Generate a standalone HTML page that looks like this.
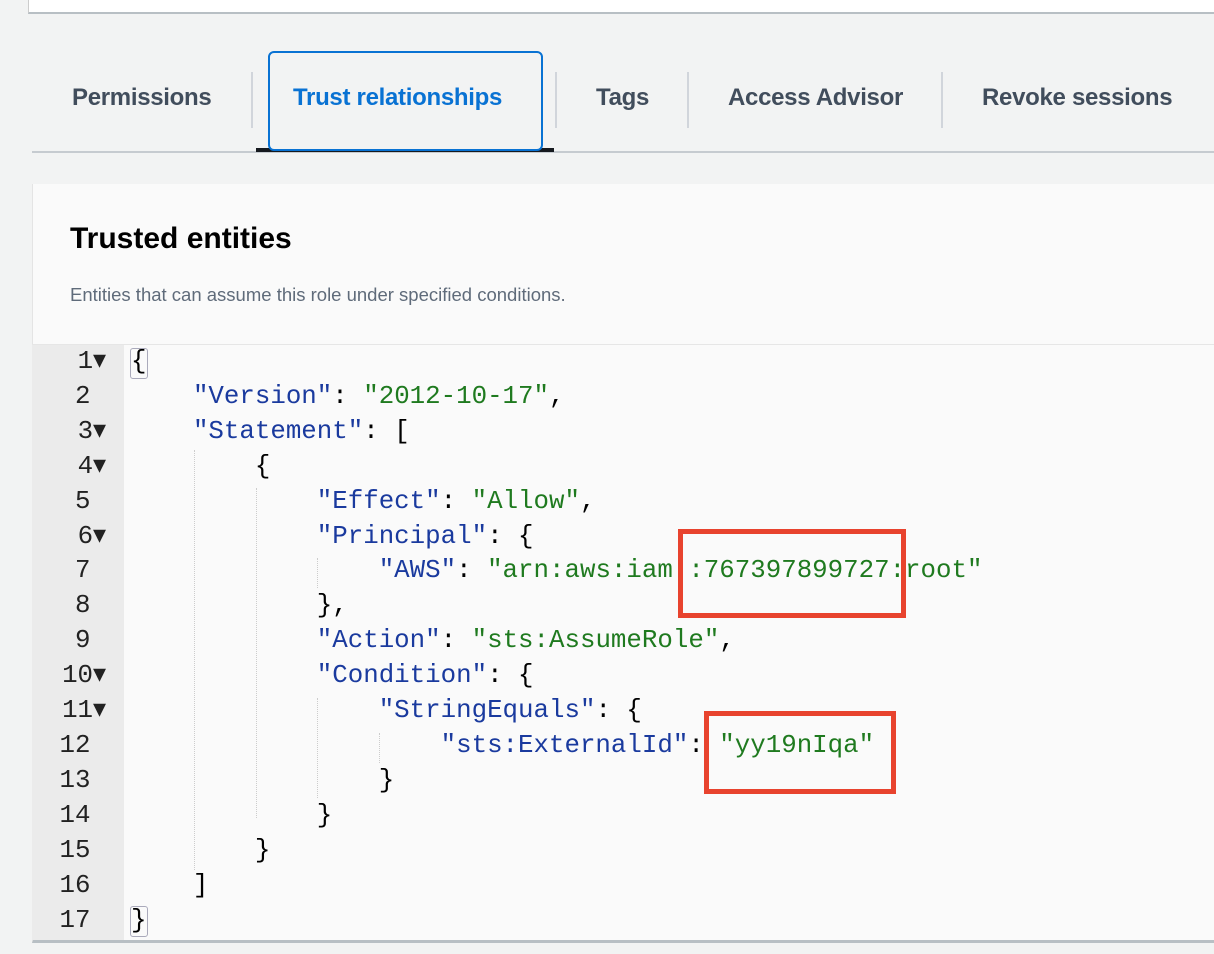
<!DOCTYPE html>
<html><head><style>
body{margin:0;width:1214px;height:954px;background:#f2f3f3;position:relative;overflow:hidden;font-family:"Liberation Sans",sans-serif}
.a{position:absolute}
.tab{position:absolute;top:84px;font-size:24px;font-weight:bold;color:#414d5c;letter-spacing:-0.3px}
.sep{position:absolute;top:72px;width:2px;height:56px;background:#d1d5db}
.code{position:absolute;left:0;top:345px;font-family:"Liberation Mono",monospace;font-size:25.8px;line-height:34.9px;white-space:pre;color:#000}
.ln{position:absolute;left:32px;width:92px;top:345px;height:595px;background:#ebebeb}
.num{position:absolute;right:0;width:90px;text-align:right;padding-right:18px;box-sizing:border-box;font-family:"Liberation Mono",monospace;font-size:25.8px;color:#333}
.k{color:#1a3a9e}.s{color:#1f7a1f}
.guide{position:absolute;border-left:1px dotted #ccc}
.red{position:absolute;border:5px solid #e8432e}
</style></head><body>
<div class="a" style="left:28px;top:-10px;width:1200px;height:22px;background:#fff;border-bottom:2px solid #b8bfc4;border-left:1px solid #ccc"></div>
<div class="a" style="left:32px;top:151px;width:1190px;height:2px;background:#c6cbd0"></div>
<div class="tab" style="left:72px">Permissions</div>
<div class="sep" style="left:251px"></div>
<div class="a" style="left:256px;top:148px;width:298px;height:4px;background:#16191f"></div>
<div class="a" style="left:268px;top:51px;width:271px;height:96px;border:2.5px solid #0972d3;border-radius:6px;background:#f2f3f3"></div>
<div class="tab" style="left:293px;color:#0972d3">Trust relationships</div>
<div class="sep" style="left:555px"></div>
<div class="tab" style="left:596px">Tags</div>
<div class="sep" style="left:687px"></div>
<div class="tab" style="left:728px">Access Advisor</div>
<div class="sep" style="left:941px"></div>
<div class="tab" style="left:982px">Revoke sessions</div>
<div class="a" style="left:32px;top:184px;width:1200px;height:756px;background:#fafafa;border-bottom:3px solid #b8bfc4;border-left:1px solid #e4e4e4"></div>
<div class="a" style="left:70px;top:222px;font-size:30px;font-weight:bold;color:#000">Trusted entities</div>
<div class="a" style="left:70px;top:284px;font-size:18.5px;color:#5f6b7a">Entities that can assume this role under specified conditions.</div>
<div class="a" style="left:32px;top:344px;width:1200px;height:1px;background:#e6e6e6"></div>
<div class="ln">
<div class="num" style="top:0;line-height:34.9px;white-space:pre;color:#222">1▾
2 
3▾
4▾
5 
6▾
7 
8 
9 
10▾
11▾
12 
13 
14 
15 
16 
17 </div></div>
<div class="guide" style="left:194px;top:450px;height:420px"></div>
<div class="guide" style="left:256px;top:488px;height:330px"></div>
<div class="guide" style="left:317px;top:558px;height:30px"></div>
<div class="guide" style="left:317px;top:698px;height:100px"></div>
<div class="guide" style="left:379px;top:733px;height:30px"></div>
<div class="a" style="left:130px;top:348px;width:16px;height:29px;border:1px solid #aab;border-radius:3px"></div>
<div class="a" style="left:130px;top:906px;width:16px;height:29px;border:1px solid #aab;border-radius:3px"></div>
<div class="code" style="left:131px">{
    <span class="k">"Version"</span>: <span class="s">"2012-10-17"</span>,
    <span class="k">"Statement"</span>: [
        {
            <span class="k">"Effect"</span>: <span class="s">"Allow"</span>,
            <span class="k">"Principal"</span>: {
                <span class="k">"AWS"</span>: <span class="s">"arn:aws:iam::767397899727:root"</span>
            },
            <span class="k">"Action"</span>: <span class="s">"sts:AssumeRole"</span>,
            <span class="k">"Condition"</span>: {
                <span class="k">"StringEquals"</span>: {
                    <span class="k">"sts:ExternalId"</span>: <span class="s">"yy19nIqa"</span>
                }
            }
        }
    ]
}</div>
<div class="red" style="left:678px;top:529px;width:218px;height:79px"></div>
<div class="red" style="left:704px;top:711px;width:182px;height:73px"></div>
</body></html>
